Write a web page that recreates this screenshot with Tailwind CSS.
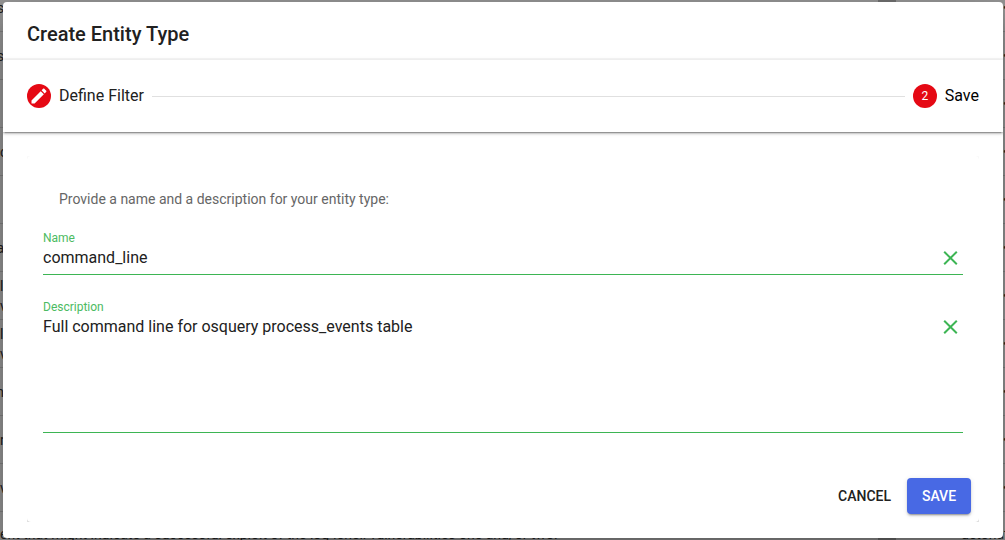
<!DOCTYPE html>
<html lang="en">
<head>
<meta charset="utf-8">
<meta name="viewport" content="width=device-width, initial-scale=1">
<title>Create Entity Type</title>
<script src="https://cdn.jsdelivr.net/npm/@tailwindcss/browser@4"></script>
</head>
<body class="relative h-screen overflow-hidden bg-[#969696] font-['Roboto',sans-serif] text-base text-[#212121]">
<!-- Table page dimmed behind the dialog -->
<div class="flex h-full flex-col justify-between overflow-hidden text-sm" aria-hidden="true">
  <div class="-mt-4 grid auto-rows-[48px]">
    <div class="flex items-center justify-between border-b border-[#808080]"><span class="flex w-1 justify-end overflow-hidden">s</span><span class="w-0.5 overflow-hidden">•</span></div>
    <div class="flex items-center justify-between border-b border-[#808080]"><span class="flex w-1 justify-end overflow-hidden">s</span><span class="w-0.5 overflow-hidden">•</span></div>
    <div class="flex items-center justify-between border-b border-[#808080]"><span></span><span class="w-0.5 overflow-hidden">•</span></div>
    <div class="flex items-center justify-between border-b border-[#808080]"><span class="flex w-1 overflow-hidden">c</span><span class="w-0.5 overflow-hidden">•</span></div>
    <div class="flex items-center justify-between border-b border-[#808080]"><span></span><span class="w-0.5 overflow-hidden">•</span></div>
    <div class="flex items-center justify-between border-b border-[#808080]"><span class="flex w-1 justify-end overflow-hidden">a</span><span class="w-0.5 overflow-hidden">•</span></div>
    <div class="flex items-center justify-between border-b border-[#808080]"><span class="flex w-1 flex-col overflow-hidden"><span>l</span><span>v</span></span><span class="w-0.5 overflow-hidden">•</span></div>
    <div class="flex items-center justify-between border-b border-[#808080]"><span class="flex w-1 flex-col overflow-hidden"><span>l</span><span>v</span></span><span class="w-0.5 overflow-hidden">•</span></div>
    <div class="flex items-center justify-between border-b border-[#808080]"><span class="flex w-1 justify-end overflow-hidden">n</span><span class="w-0.5 overflow-hidden">•</span></div>
    <div class="flex items-center justify-between border-b border-[#808080]"><span class="w-1 overflow-hidden">r</span><span class="w-0.5 overflow-hidden">•</span></div>
    <div class="flex items-center justify-between border-b border-[#808080]"><span class="w-1 overflow-hidden">v</span><span class="w-0.5 overflow-hidden">•</span></div>
  </div>
  <div class="-mb-1 flex h-5 shrink-0 justify-between leading-5 whitespace-nowrap">
    <span>ent that might indicate a successful exploit of the log4shell vulnerabilities one and/or two.</span>
    <span class="w-11 overflow-hidden">detonate</span>
  </div>
</div>
<span class="absolute inset-y-0 right-[109px] w-[18px] bg-[#707070]"></span>

<!-- Dialog -->
<div class="absolute inset-0 flex pt-0.5 pr-0.5 pb-0.5 pl-[3px]">
<section role="dialog" aria-labelledby="dialog-title" class="flex min-w-0 flex-1 flex-col overflow-hidden rounded bg-white shadow-[0_11px_15px_-7px_rgba(0,0,0,0.2),0_24px_38px_3px_rgba(0,0,0,0.14),0_9px_46px_8px_rgba(0,0,0,0.12)]">
  <h1 id="dialog-title" class="px-6 pt-4 pb-2 text-xl leading-8 font-medium">Create Entity Type</h1>
  <div class="h-0.5 bg-[#f6f6f6]"></div>
  <div class="flex flex-1 flex-col">
    <ol class="flex h-[72px] items-center gap-2 px-6 shadow-[0_3px_1px_-2px_rgba(0,0,0,0.2),0_2px_2px_0_rgba(0,0,0,0.14),0_1px_5px_0_rgba(0,0,0,0.12),0_1px_1px_0_rgba(0,0,0,0.1)]">
      <li class="flex items-center gap-2">
        <span class="flex size-6 items-center justify-center rounded-full bg-[#e50914]">
          <svg class="size-5" viewBox="0 0 24 24" fill="white" aria-hidden="true"><path d="M20.71 7.04c.39-.39.39-1.04 0-1.41l-2.34-2.34c-.37-.39-1.02-.39-1.41 0l-1.84 1.83 3.75 3.75M3 17.25V21h3.75L17.81 9.93l-3.75-3.75L3 17.25z"/></svg>
        </span>
        <span>Define Filter</span>
      </li>
      <li class="h-px flex-1 bg-[#e0e0e0]" role="presentation"></li>
      <li class="flex items-center gap-2 text-black">
        <span class="flex size-6 items-center justify-center rounded-full bg-[#e50914] text-xs text-white">2</span>
        <span>Save</span>
      </li>
    </ol>
    <div class="flex flex-1 flex-col px-6 pt-6 pb-4">
      <div class="flex flex-1 overflow-hidden">
      <form class="flex flex-1 flex-col rounded px-4 pt-[33px] pb-2 shadow-[0_2px_2px_0_rgba(0,0,0,0.14),0_1px_5px_0_rgba(0,0,0,0.12)]">
        <p class="px-4 text-sm leading-5 text-[#666666]">Provide a name and a description for your entity type:</p>
        <div class="mt-5 flex h-[45px] items-end">
          <div class="flex min-w-0 flex-1 flex-col">
            <label for="name" class="self-start text-xs leading-4 text-[#4cbb62]">Name</label>
            <input id="name" type="text" value="command_line" class="mb-1 h-6 w-full outline-none">
          </div>
          <button type="button" aria-label="Clear name" class="mb-1 text-[#3db554]">
            <svg class="size-6" viewBox="0 0 24 24" fill="none" stroke="currentColor" stroke-width="2" aria-hidden="true"><path d="M5.2 5.7l12.6 12.6M17.8 5.7L5.2 18.3"/></svg>
          </button>
        </div>
        <div class="h-px bg-[#3db554]"></div>
        <div class="mt-6 flex h-[133px] items-start">
          <div class="flex h-full min-w-0 flex-1 flex-col">
            <label for="description" class="self-start text-xs leading-4 text-[#4cbb62]">Description</label>
            <textarea id="description" class="w-full flex-1 resize-none leading-6 outline-none">Full command line for osquery process_events table</textarea>
          </div>
          <button type="button" aria-label="Clear description" class="mt-4 text-[#3db554]">
            <svg class="size-6" viewBox="0 0 24 24" fill="none" stroke="currentColor" stroke-width="2" aria-hidden="true"><path d="M5.2 5.7l12.6 12.6M17.8 5.7L5.2 18.3"/></svg>
          </button>
        </div>
        <div class="h-px bg-[#3db554]"></div>
        <div class="mt-auto -mr-2 flex justify-end gap-1 text-sm font-medium">
          <button type="button" class="h-9 px-3">CANCEL</button>
          <button type="submit" class="h-9 w-16 rounded bg-[#4869e4] text-white shadow-[0_3px_1px_-2px_rgba(0,0,0,0.2),0_2px_2px_0_rgba(0,0,0,0.14),0_1px_5px_0_rgba(0,0,0,0.12)]">SAVE</button>
        </div>
      </form>
      </div>
    </div>
  </div>
</section>
</div>
</body>
</html>
